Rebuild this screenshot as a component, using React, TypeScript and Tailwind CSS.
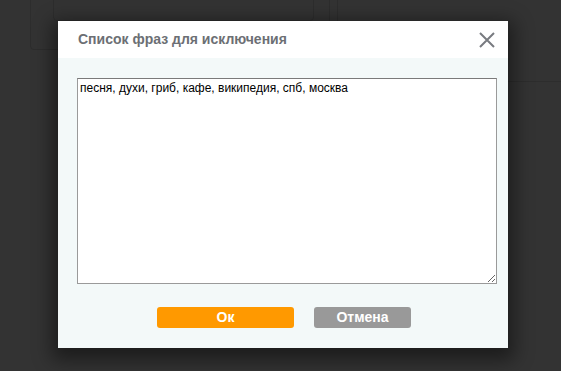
import React from "react";

export default function App() {
  return (
    <div
      className="relative h-[371px] w-[561px] overflow-hidden bg-[#333333]"
      style={{ fontFamily: '"Liberation Sans", Arial, sans-serif' }}
    >
      {/* faint page content behind overlay */}
      <div className="absolute left-[30px] top-[-10px] h-[60px] w-[300px] rounded-[4px] border border-[#2d2d2d]" />
      <div className="absolute left-[53px] top-[-10px] h-[31px] w-[261px] rounded-[4px] border border-[#2d2d2d]" />
      <div className="absolute left-[337px] top-[-10px] h-[31px] w-[240px] border-l border-[#2d2d2d]" />
      <div className="absolute left-[330px] top-[81px] w-[240px] border-t border-[#2d2d2d]" />

      {/* modal */}
      <div className="absolute left-[58px] top-[21px] flex h-[327px] w-[450px] flex-col bg-[#f3f9f9] shadow-[0_6px_18px_6px_rgba(0,0,0,0.45)]">
        <div className="flex h-[37px] items-center justify-between bg-white pl-[20px] pr-[13px]">
          <span className="text-[14px] font-bold text-[#6c6f74]">Список фраз для исключения</span>
          <svg width="16" height="16" viewBox="0 0 16 16" className="mt-[1px]">
            <path d="M1 1 L15 15 M15 1 L1 15" stroke="#787b80" strokeWidth="2" />
          </svg>
        </div>
        <div className="flex flex-1 flex-col pl-[19px] pr-[11px] pt-[20px]">
          <textarea
            className="h-[206px] w-[420px] resize border border-[#9a9a9a] border-t-[#7a7a7a] bg-white px-[2px] py-[2px] text-[12px] leading-[15px] text-black outline-none"
            style={{ fontFamily: '"Liberation Sans", Arial, sans-serif' }}
            defaultValue="песня, духи, гриб, кафе, википедия, спб, москва"
          />
          <div className="mt-[23px] flex justify-center gap-[20px] pr-[6px]">
            <button className="h-[21px] w-[137px] rounded-[3px] bg-[#ff9900] text-[14px] font-bold leading-[21px] text-white">
              Ок
            </button>
            <button className="h-[21px] w-[97px] rounded-[3px] bg-[#999999] text-[14px] font-bold leading-[21px] text-white">
              Отмена
            </button>
          </div>
        </div>
      </div>
    </div>
  );
}
